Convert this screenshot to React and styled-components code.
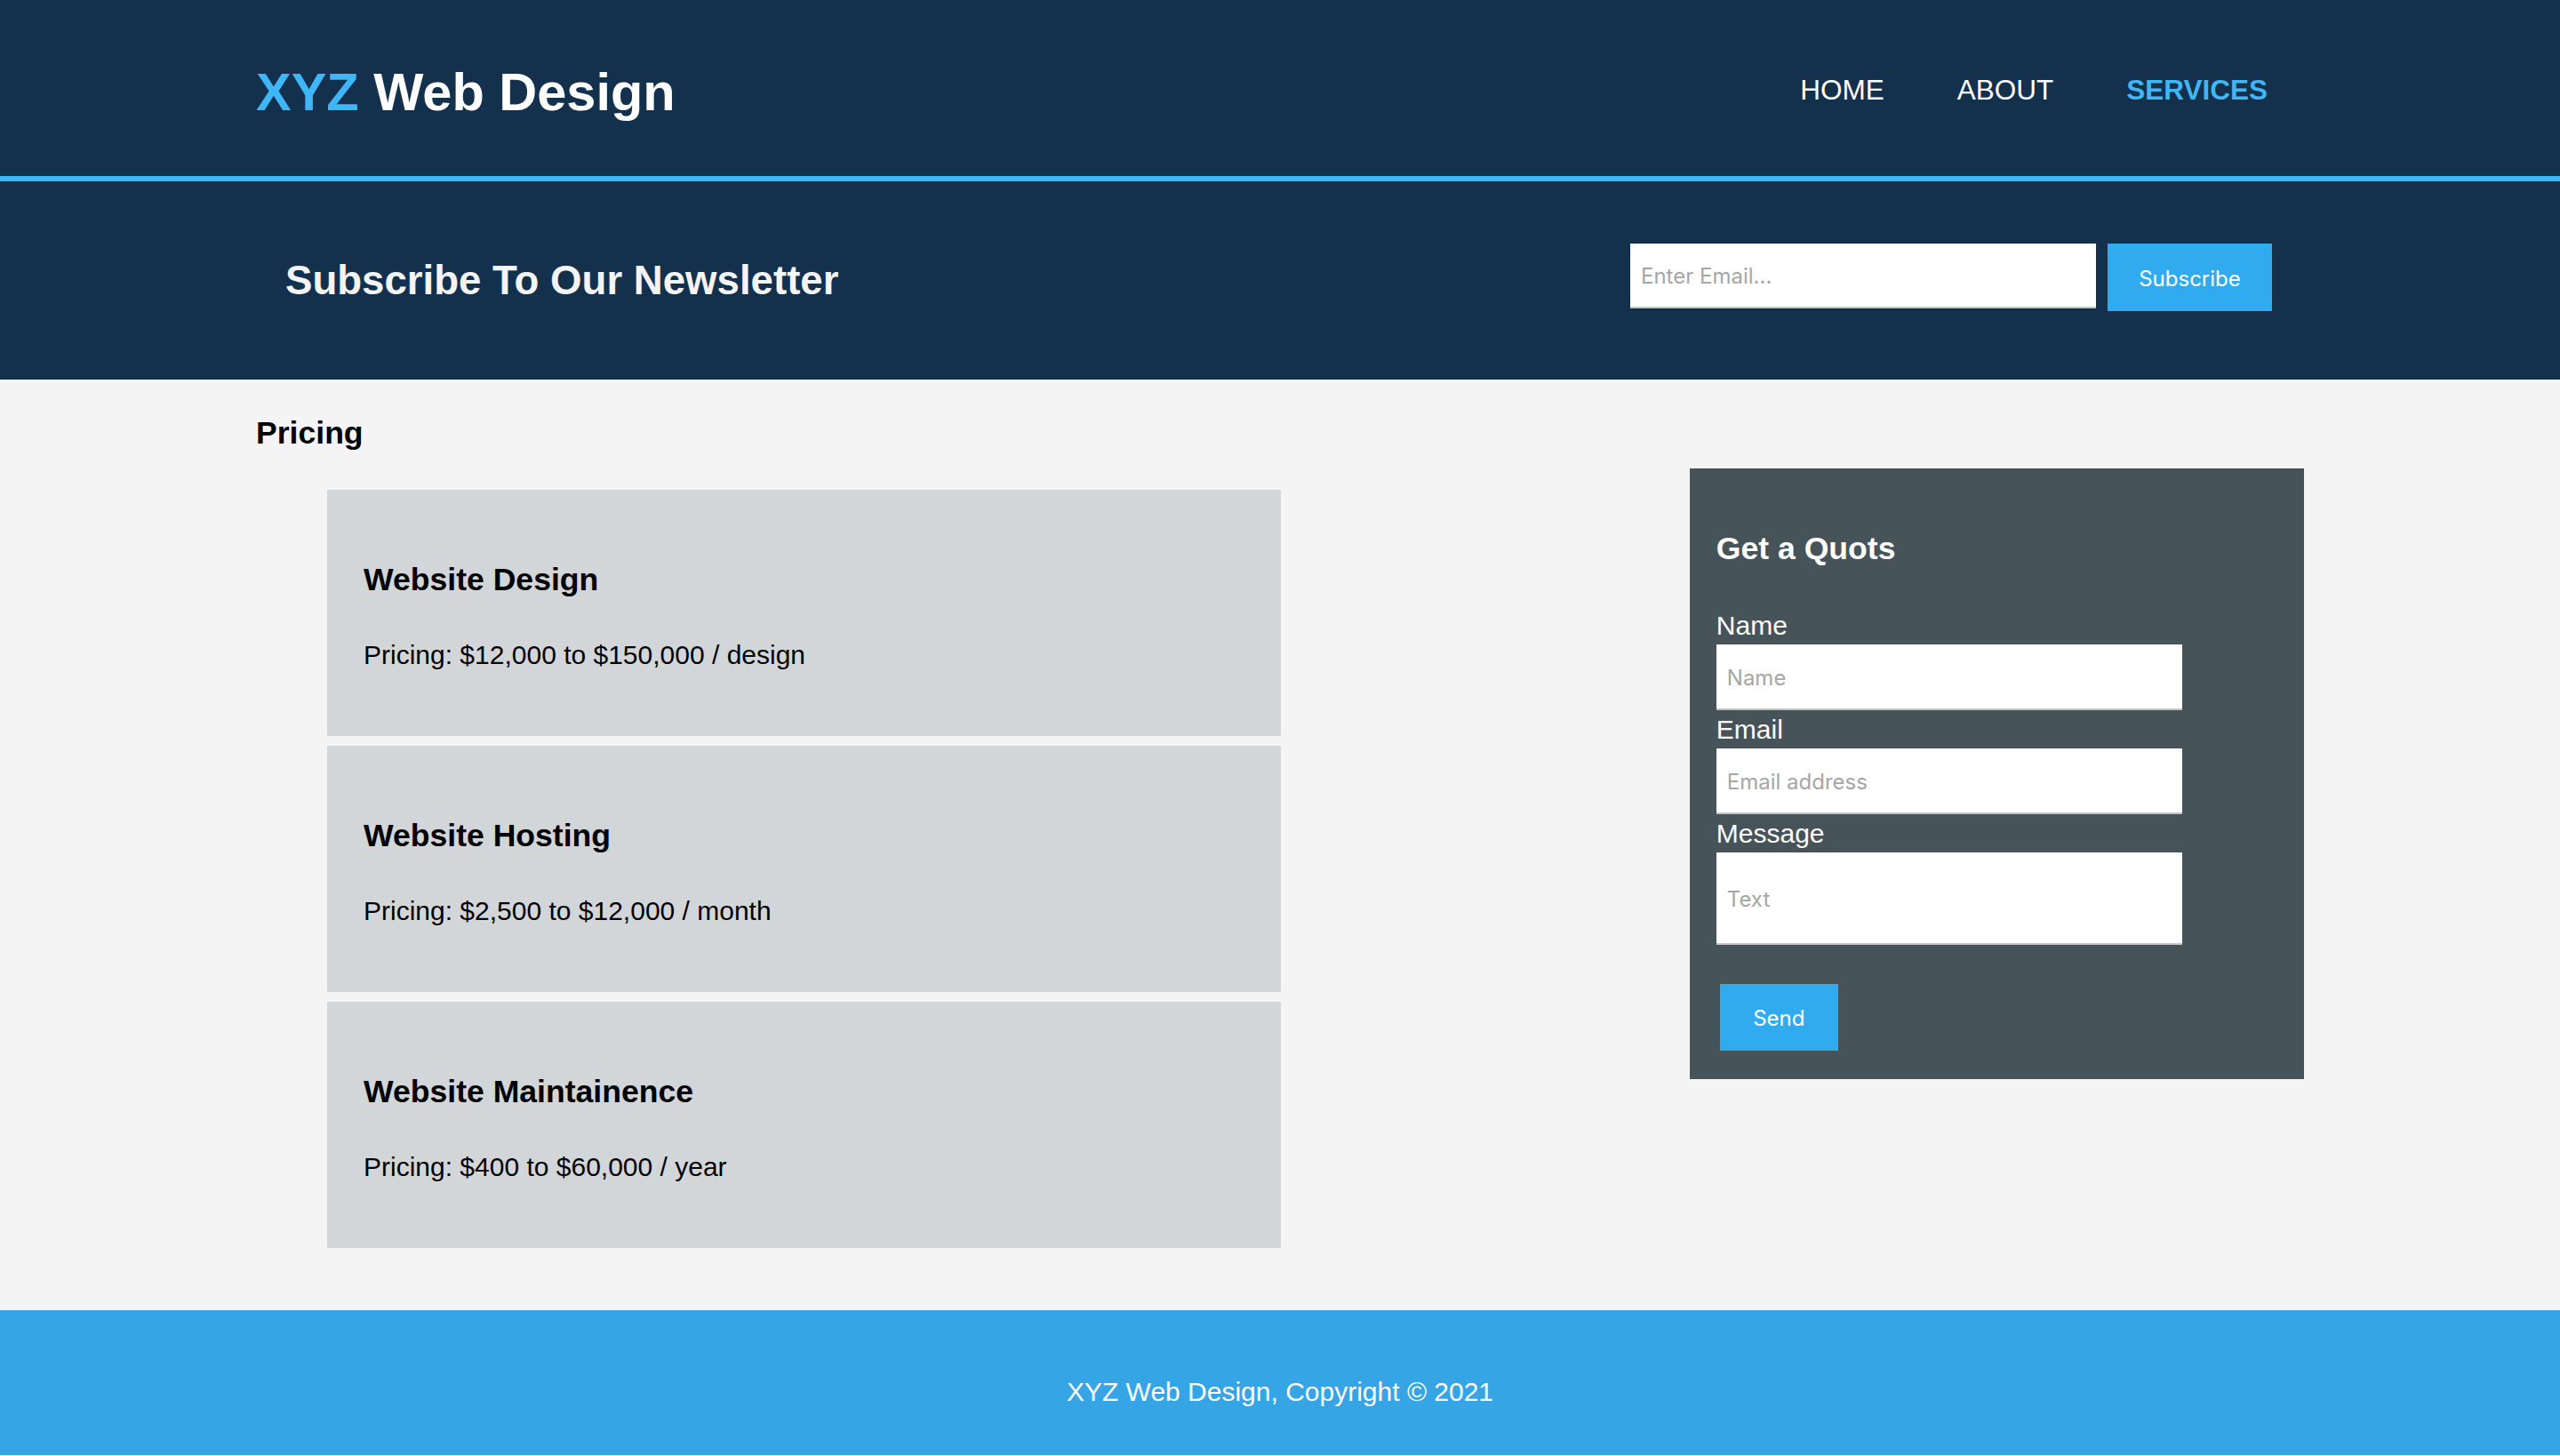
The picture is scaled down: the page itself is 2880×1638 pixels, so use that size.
import React from "react";
import styled, { createGlobalStyle } from "styled-components";

const GlobalStyle = createGlobalStyle`
  html, body { margin: 0; padding: 0; overflow: hidden; }
  body {
    background: #f4f4f4;
    font-family: "Liberation Sans", Arial, sans-serif;
    font-size: 30px;
    line-height: 35px;
    color: #000;
  }
  * { box-sizing: border-box; }
`;

const Container = styled.div`
  width: 2304px;
  margin: 0 auto;
`;

const Header = styled.header`
  background: #13304d;
  height: 204px;
  border-bottom: 6px solid #3fb6f7;
`;

const HeaderInner = styled(Container)`
  height: 100%;
  display: flex;
  justify-content: space-between;
  align-items: center;
`;

const Logo = styled.h1`
  margin: 0;
  padding-top: 9px;
  font-size: 59.5px;
  line-height: 68px;
  font-weight: 700;
  color: #fff;

  span { color: #3fb6f7; }
`;

const Nav = styled.ul`
  list-style: none;
  margin: 0;
  padding: 4px 0 0;
  display: flex;
`;

const NavItem = styled.li`
  padding: 0 41px;
  font-size: 31.5px;
  line-height: 36px;
  text-transform: uppercase;
  color: ${(p) => (p.$active ? "#3fb6f7" : "#fff")};
  font-weight: ${(p) => (p.$active ? 700 : 400)};
`;

const Newsletter = styled.section`
  background: #13304d;
  height: 223px;
`;

const NewsletterInner = styled(Container)`
  height: 100%;
  display: flex;
  justify-content: space-between;
  align-items: center;
`;

const NewsTitle = styled.h2`
  margin: 0;
  padding-left: 33px;
  font-size: 45.6px;
  line-height: 52px;
  font-weight: 700;
  color: #f4f4f4;
`;

const NewsForm = styled.form`
  display: flex;
  align-items: flex-start;
  gap: 13px;
  margin: 0 36px 7px 0;
`;

const TextInput = styled.input`
  display: block;
  width: 524px;
  height: ${(p) => p.$h || 74}px;
  border: none;
  border-bottom: 2px solid #c4c4c4;
  background: #fff;
  padding: 2px 12px 0;
  font-family: Inter, "Open Sans", sans-serif;
  font-size: 24px;
  color: #333;
  outline: none;

  &::placeholder { color: #a6a6a6; }
`;

const BlueButton = styled.button`
  width: ${(p) => p.$w}px;
  height: ${(p) => p.$h}px;
  border: none;
  background: #31abf0;
  color: #fff;
  font-family: Inter, "Open Sans", sans-serif;
  font-size: 24px;
  padding: 2px 0 0;
  margin: ${(p) => p.$m || 0};
`;

const Main = styled(Container)`
  display: flex;
  align-items: flex-start;
`;

const Left = styled.section`
  width: 70%;
`;

const SectionTitle = styled.h3`
  margin: 40px 0 0;
  font-size: 35.6px;
  line-height: 41px;
  font-weight: 700;
`;

const Cards = styled.ul`
  list-style: none;
  margin: 43px 0 70px;
  padding: 0 0 0 80px;
  display: flex;
  flex-direction: column;
  gap: 11px;
`;

const Card = styled.li`
  width: 70%;
  background: #d2d6d9;
  padding: 81px 41px 74px;

  h3 {
    margin: 0;
    font-size: 35.6px;
    line-height: 41px;
    font-weight: 700;
  }

  p {
    margin: 46px 0 0;
  }
`;

const Aside = styled.aside`
  width: 30%;
  margin-top: 100px;
  background: #465459;
  padding: 30px 30px 32px;
  color: #fff;
`;

const QuoteTitle = styled.h3`
  margin: 40px 0 48px;
  font-size: 35.6px;
  line-height: 41px;
  font-weight: 700;
`;

const Label = styled.label`
  display: block;
  margin: ${(p) => (p.$first ? "0" : "4px")} 0 4px;
`;

const Footer = styled.footer`
  background: #35a5e6;
  height: 163px;
  padding-top: 74px;
  text-align: center;
  color: #fff;

  p { margin: 0; }
`;

const services = [
  { title: "Website Design", price: "Pricing: $12,000 to $150,000 / design" },
  { title: "Website Hosting", price: "Pricing: $2,500 to $12,000 / month" },
  { title: "Website Maintainence", price: "Pricing: $400 to $60,000 / year" },
];

export default function App() {
  return (
    <>
      <GlobalStyle />
      <Header>
        <HeaderInner>
          <Logo>
            <span>XYZ</span> Web Design
          </Logo>
          <Nav>
            <NavItem>Home</NavItem>
            <NavItem>About</NavItem>
            <NavItem $active>Services</NavItem>
          </Nav>
        </HeaderInner>
      </Header>

      <Newsletter>
        <NewsletterInner>
          <NewsTitle>Subscribe To Our Newsletter</NewsTitle>
          <NewsForm onSubmit={(e) => e.preventDefault()}>
            <TextInput type="email" placeholder="Enter Email..." $h={73} />
            <BlueButton type="submit" $w={185} $h={76}>
              Subscribe
            </BlueButton>
          </NewsForm>
        </NewsletterInner>
      </Newsletter>

      <Main>
        <Left>
          <SectionTitle>Pricing</SectionTitle>
          <Cards>
            {services.map((s) => (
              <Card key={s.title}>
                <h3>{s.title}</h3>
                <p>{s.price}</p>
              </Card>
            ))}
          </Cards>
        </Left>

        <Aside>
          <QuoteTitle>Get a Quots</QuoteTitle>
          <form onSubmit={(e) => e.preventDefault()}>
            <Label $first>Name</Label>
            <TextInput type="text" placeholder="Name" />
            <Label>Email</Label>
            <TextInput type="email" placeholder="Email address" />
            <Label>Message</Label>
            <TextInput type="text" placeholder="Text" $h={104} />
            <BlueButton type="submit" $w={133} $h={75} $m="44px 0 0 4px">
              Send
            </BlueButton>
          </form>
        </Aside>
      </Main>

      <Footer>
        <p>XYZ Web Design, Copyright © 2021</p>
      </Footer>
    </>
  );
}
